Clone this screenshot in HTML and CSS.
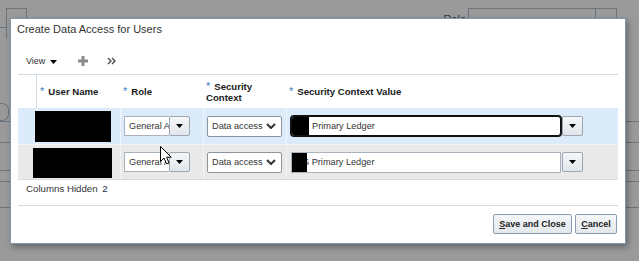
FILE: index.html
```html
<!DOCTYPE html>
<html>
<head>
  <meta charset="UTF-8">
  <title>Create Data Access for Users</title>
  <link rel="stylesheet" href="styles.css">
</head>
<body>
  <!-- page behind the modal -->
  <div class="page">
    <div class="page-top">
      <div class="page-tabs"><span class="tab-a"></span><span class="tab-b"></span></div>
      <div class="page-field">
        <label>Role</label>
        <span class="field-box"><span class="field-btn"></span></span>
      </div>
    </div>
    <div class="page-rows">
      <div class="stub"></div>
      <div class="rule"></div>
      <div class="rule r2"></div>
      <div class="rule r3"></div>
      <div class="rule r4"></div>
      <div class="rule r5"></div>
    </div>
  </div>

  <div class="dialog">
    <div class="dlg-title">Create Data Access for Users</div>
    <div class="dlg-body">
      <div class="toolbar">
        <span class="tb-view">View
          <svg width="7" height="4" viewBox="0 0 7 4"><polygon points="0,0 7,0 3.5,4" fill="#000"/></svg>
        </span>
        <svg class="tb-add" width="10" height="10" viewBox="0 0 10 10"><rect x="3.5" y="0" width="3" height="10" fill="#8a8a8a"/><rect x="0" y="3.5" width="10" height="3" fill="#8a8a8a"/></svg>
        <svg class="tb-more" width="9" height="8" viewBox="0 0 9 8"><path d="M1 1 L4 4 L1 7 M5 1 L8 4 L5 7" fill="none" stroke="#444" stroke-width="1.3"/></svg>
      </div>

      <div class="grid">
        <div class="hd sel"></div>
        <div class="hd"><span class="required">User Name</span></div>
        <div class="hd"><span class="required">Role</span></div>
        <div class="hd"><span class="required">Security Context</span></div>
        <div class="hd"><span class="required">Security Context Value</span></div>

        <div class="cell row1 sel"></div>
        <div class="cell row1"><span class="redact name1"></span></div>
        <div class="cell row1 pad4">
          <span class="combo"><span class="combo-in">General Accountant</span><span class="combo-btn"><svg width="7" height="4" viewBox="0 0 7 4"><polygon points="0,0 7,0 3.5,4" fill="#000"/></svg></span></span>
        </div>
        <div class="cell row1 pad4">
          <span class="select">Data access<svg width="10" height="6" viewBox="0 0 10 6"><path d="M1 1 L5 5 L9 1" fill="none" stroke="#333" stroke-width="2"/></svg></span>
        </div>
        <div class="cell row1 pad4">
          <span class="lov-in focus"><span class="redact v1"></span><span class="lov-text">Primary Ledger</span></span><span class="combo-btn lov-btn"><svg width="7" height="4" viewBox="0 0 7 4"><polygon points="0,0 7,0 3.5,4" fill="#000"/></svg></span>
        </div>

        <div class="cell row2 sel"></div>
        <div class="cell row2"><span class="redact name2"></span></div>
        <div class="cell row2 pad4">
          <span class="combo"><span class="combo-in">General Accountant</span><span class="combo-btn"><svg width="7" height="4" viewBox="0 0 7 4"><polygon points="0,0 7,0 3.5,4" fill="#000"/></svg></span></span>
        </div>
        <div class="cell row2 pad4">
          <span class="select">Data access<svg width="10" height="6" viewBox="0 0 10 6"><path d="M1 1 L5 5 L9 1" fill="none" stroke="#333" stroke-width="2"/></svg></span>
        </div>
        <div class="cell row2 pad4">
          <span class="lov-in"><span class="redact v2"></span><span class="lov-text cut">S Primary Ledger</span></span><span class="combo-btn lov-btn"><svg width="7" height="4" viewBox="0 0 7 4"><polygon points="0,0 7,0 3.5,4" fill="#000"/></svg></span>
        </div>
      </div>

      <div class="hidden-cols">Columns Hidden <span class="count">2</span></div>
      <div class="sep"></div>
      <div class="actions">
        <button class="btn btn-save"><u>S</u>ave and Close</button>
        <button class="btn"><u>C</u>ancel</button>
      </div>
    </div>
  </div>

  <svg class="cursor" width="13" height="19" viewBox="0 0 13 19"><path d="M0.5 0.5 L0.5 15.5 L4 12 L6.5 17.8 L9 16.8 L6.6 11.2 L11.3 11.2 Z" fill="#fff" stroke="#000" stroke-width="1"/></svg>
</body>
</html>
```

FILE: styles.css
```css
body {
  margin: 0;
  height: 261px;
  overflow: hidden;
  position: relative;
  background: #9a9a9a;
  font-family: "Liberation Sans", Arial, sans-serif;
}

/* page behind the overlay */
.page-top { display: flex; justify-content: space-between; padding-top: 8px; height: 30px; }
.page-tabs { display: flex; }
.tab-a { width: 6px; height: 19px; border-bottom: 1px solid #6b747c; }
.tab-b { width: 19px; height: 30px; border: 1px solid #6b747c; border-bottom: none; }
.page-field { display: flex; align-items: flex-start; gap: 2px; margin-right: 22px; }
.page-field label { font-size: 11px; color: #333; margin-top: 5px; }
.field-box { display: flex; justify-content: flex-end; width: 147px; height: 24px; border: 1px solid #6b747c; }
.field-btn { width: 20px; border-left: 1px solid #6b747c; }
.page-rows { margin-top: 65px; }
.stub { width: 8px; height: 16px; border: 1px solid #6b747c; border-left: none; border-radius: 0 7px 7px 0; }
.rule { border-top: 1px solid #6b747c; }
.rule.r2 { margin-top: 20px; }
.rule.r3 { margin-top: 27px; }
.rule.r4 { margin-top: 10px; }
.rule.r5 { margin-top: 25px; }

/* dialog */
.dialog {
  position: absolute;
  left: 10px;
  top: 18px;
  width: 616px;
  height: 226px;
  box-sizing: border-box;
  background: #fff;
  border: 1px solid #8197ab;
  box-shadow: 2px 3px 6px rgba(0, 0, 0, 0.35);
}
.dlg-title {
  height: 20px;
  line-height: 20px;
  padding: 0 6px;
  font-size: 11px;
  color: #333;
}
.dlg-body { padding: 0 7px; }

.toolbar {
  display: flex;
  align-items: center;
  height: 20px;
  margin-top: 12px;
  padding-left: 8px;
  font-size: 9px;
  color: #333;
}
.tb-view { display: flex; align-items: center; gap: 5px; }
.tb-view svg { margin-top: 1px; }
.tb-add { margin-left: 21px; }
.tb-more { margin-left: 19px; }

.grid {
  display: grid;
  grid-template-columns: 19px 83px 83px 83px 1fr;
  margin-top: 3px;
  border-top: 1px solid #d3dde5;
  border-bottom: 1px solid #d3dde5;
}
.hd {
  height: 33px;
  display: flex;
  align-items: center;
  padding-left: 3px;
  font-size: 9.6px;
  line-height: 11px;
  font-weight: bold;
  color: #1a1a1a;
}
.hd.sel { border-right: 1px solid #d3dde5; padding: 0; }
.required::before {
  content: "*";
  color: #3d7bc4;
  font-weight: normal;
  font-size: 11px;
  margin-right: 4px;
}

.cell {
  display: flex;
  align-items: center;
  border-left: 1px solid rgba(255, 255, 255, 0.5);
  font-size: 9.2px;
  color: #333;
}
.cell.sel { border-left: none; }
.cell.pad4 { padding-left: 3px; }
.row1 { height: 36px; background: #dcebfa; border-bottom: 1px solid #f3f6f8; }
.row2 { height: 34px; background: #e9e9e9; }

.redact { display: block; background: #000; }
.redact.name1 { width: 76px; height: 31px; margin-left: -3px; margin-top: 1px; }
.redact.name2 { width: 79px; height: 30px; margin-left: -5px; margin-top: 2px; }

.combo { display: flex; height: 20px; }
.combo-in {
  width: 40px;
  padding-left: 4px;
  line-height: 18px;
  background: #fff;
  border: 1px solid #a8b3bd;
  border-right: none;
  white-space: nowrap;
  overflow: hidden;
}
.combo-btn {
  display: flex;
  align-items: center;
  justify-content: center;
  width: 19px;
  height: 18px;
  background: linear-gradient(#f5f7f9, #e1e6ea);
  border: 1px solid #9aa6b1;
  border-radius: 2px;
}

.select {
  display: flex;
  align-items: center;
  justify-content: space-between;
  box-sizing: border-box;
  width: 75px;
  height: 21px;
  padding: 0 5px 0 4px;
  background: #fff;
  border: 1px solid #8a959e;
  border-radius: 2px;
}

.lov-in {
  display: flex;
  align-items: center;
  box-sizing: border-box;
  width: 270px;
  height: 21px;
  margin-left: 1px;
  background: #fff;
  border: 1px solid #a8b3bd;
  overflow: hidden;
}
.lov-in.focus { border: 1px solid #111; box-shadow: 0 0 0 1px #111; border-radius: 3px; height: 20px; }
.redact.v1 { width: 17px; height: 100%; }
.redact.v2 { width: 15px; height: 100%; position: relative; z-index: 1; }
.lov-text { margin-left: 3px; white-space: nowrap; }
.lov-text.cut { margin-left: -4px; }
.lov-btn { margin-left: 1px; }

.hidden-cols {
  height: 18px;
  line-height: 18px;
  padding-left: 8px;
  font-size: 9.7px;
  color: #333;
}
.hidden-cols .count { margin-left: 2px; color: #1a2a4a; }
.sep { margin-top: 7px; border-top: 1px solid #d3dde5; }

.actions {
  display: flex;
  justify-content: flex-end;
  gap: 3px;
  margin-top: 8px;
  padding-right: 1px;
}
.btn {
  height: 20px;
  padding: 0;
  font-family: "Liberation Sans", Arial, sans-serif;
  font-size: 9px;
  font-weight: bold;
  color: #222;
  background: linear-gradient(#f5f7f9, #e3e8ec);
  border: 1px solid #8d9eae;
  border-radius: 2px;
}
.btn-save { width: 79px; }
.btn + .btn { width: 42px; }

.cursor { position: absolute; left: 160px; top: 146px; }
```
